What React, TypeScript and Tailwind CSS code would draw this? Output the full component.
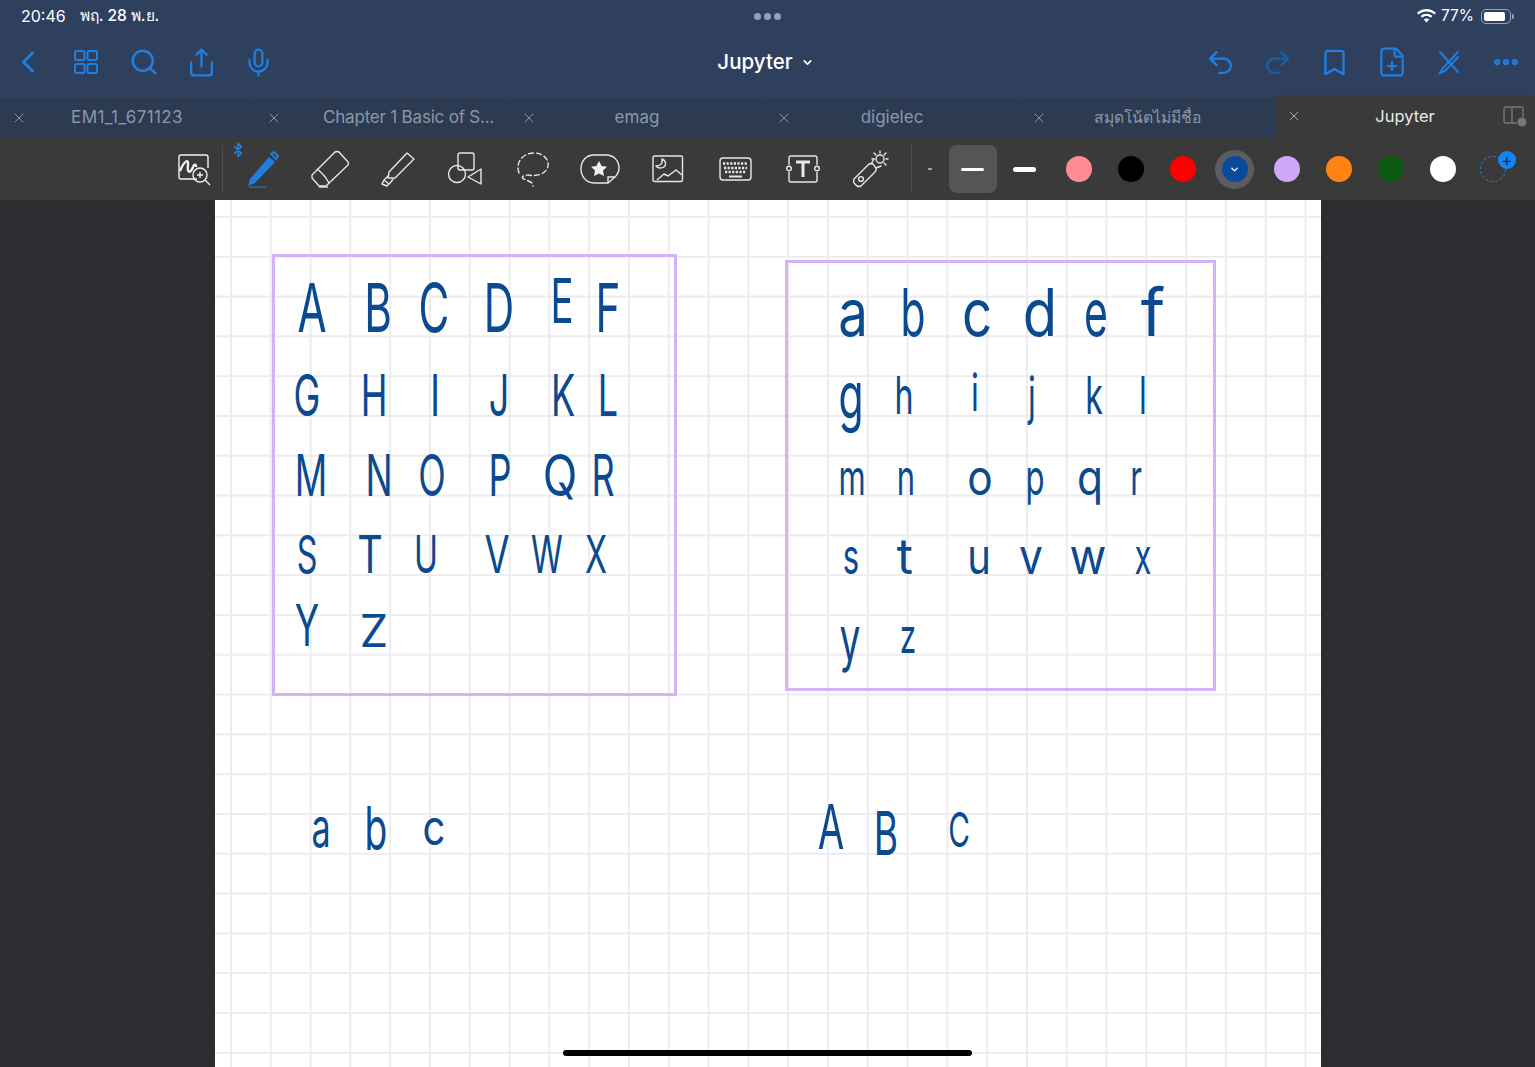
import { Bluetooth, Bookmark, ChevronDown, ChevronLeft, FilePlus, Mic, MoreHorizontal, Redo2, Search, Share, Undo2, X } from "lucide-react";

const sans = "font-['Inter','Noto_Sans','Liberation_Sans',sans-serif]";

const tabs = [
  { label: "EM1_1_671123", cls: "justify-center tracking-[0.4px]" },
  { label: "Chapter 1 Basic of S...", cls: "pl-[68px] tracking-[-0.2px]" },
  { label: "emag", cls: "justify-center" },
  { label: "digielec", cls: "justify-center" },
  { label: "สมุดโน้ตไม่มีชื่อ", cls: "justify-center text-[15.7px]!" },
];

const colors = ["bg-[#ff8c90]", "bg-black", "bg-[#ff0000]", "", "bg-[#cfa8f7]", "bg-[#ff8214]", "bg-[#0f5a12]", "bg-white"];

const ink = [
  // capitals, left box
  ["A", "left-[97px] top-[73px] text-[68px]"],
  ["B", "left-[163px] top-[73px] text-[68px]"],
  ["C", "left-[219px] top-[73px] text-[68px]"],
  ["D", "left-[284px] top-[73px] text-[68px]"],
  ["E", "left-[347px] top-[70px] text-[62px]"],
  ["F", "left-[393px] top-[73px] text-[68px]"],
  ["G", "left-[92px] top-[166px] text-[58px]"],
  ["H", "left-[159px] top-[166px] text-[58px]"],
  ["I", "left-[220px] top-[166px] text-[58px]"],
  ["J", "left-[284px] top-[166px] text-[58px]"],
  ["K", "left-[348px] top-[166px] text-[58px]"],
  ["L", "left-[393px] top-[166px] text-[58px]"],
  ["M", "left-[96px] top-[246px] text-[58px]"],
  ["N", "left-[164px] top-[246px] text-[58px]"],
  ["O", "left-[217px] top-[246px] text-[58px]"],
  ["P", "left-[285px] top-[246px] text-[58px]"],
  ["Q", "left-[345px] top-[246px] text-[58px] scale-x-[0.78]!"],
  ["R", "left-[388px] top-[246px] text-[58px]"],
  ["S", "left-[92px] top-[329px] text-[52px]"],
  ["T", "left-[155px] top-[329px] text-[52px] scale-x-[0.76]!"],
  ["U", "left-[211px] top-[329px] text-[52px]"],
  ["V", "left-[282px] top-[329px] text-[52px] scale-x-[0.7]!"],
  ["W", "left-[332px] top-[329px] text-[52px]"],
  ["X", "left-[381px] top-[329px] text-[52px]"],
  ["Y", "left-[92px] top-[396px] text-[58px]"],
  ["Z", "left-[159px] top-[408px] text-[45px] scale-x-100!"],
  // small letters, right box
  ["a", "left-[638px] top-[79px] text-[66px] scale-x-[0.8]!"],
  ["b", "left-[698px] top-[79px] text-[66px]"],
  ["c", "left-[762px] top-[79px] text-[66px] scale-x-[0.8]!"],
  ["d", "left-[825px] top-[79px] text-[66px] scale-x-[0.85]!"],
  ["e", "left-[881px] top-[79px] text-[66px]"],
  ["f", "left-[938px] top-[79px] text-[66px] scale-x-100!"],
  ["g", "left-[636px] top-[162px] text-[66px]"],
  ["h", "left-[689px] top-[170px] text-[52px]"],
  ["i", "left-[760px] top-[167px] text-[52px]"],
  ["j", "left-[817px] top-[170px] text-[52px]"],
  ["k", "left-[879px] top-[170px] text-[52px]"],
  ["l", "left-[928px] top-[170px] text-[52px]"],
  ["m", "left-[637px] top-[252px] text-[50px]"],
  ["n", "left-[691px] top-[252px] text-[50px]"],
  ["o", "left-[765px] top-[252px] text-[50px] scale-x-[0.85]!"],
  ["p", "left-[820px] top-[252px] text-[50px]"],
  ["q", "left-[875px] top-[252px] text-[50px] scale-x-[0.85]!"],
  ["r", "left-[921px] top-[252px] text-[50px]"],
  ["s", "left-[636px] top-[331px] text-[50px]"],
  ["t", "left-[690px] top-[331px] text-[50px] scale-x-100!"],
  ["u", "left-[764px] top-[331px] text-[50px] scale-x-[0.8]!"],
  ["v", "left-[816px] top-[331px] text-[50px] scale-x-[0.85]!"],
  ["w", "left-[873px] top-[331px] text-[50px] scale-x-[0.9]!"],
  ["x", "left-[928px] top-[331px] text-[50px]"],
  ["y", "left-[635px] top-[408px] text-[60px]"],
  ["z", "left-[693px] top-[412px] text-[48px]"],
  // bottom row
  ["a", "left-[106px] top-[600px] text-[55px]"],
  ["b", "left-[161px] top-[598px] text-[60px]"],
  ["c", "left-[219px] top-[602px] text-[50px] scale-x-[0.8]!"],
  ["A", "left-[616px] top-[596px] text-[62px]"],
  ["B", "left-[671px] top-[603px] text-[60px]"],
  ["C", "left-[744px] top-[606px] text-[48px]"],
];

function GridIcon() {
  return (
    <svg width="26" height="26" viewBox="0 0 26 26" fill="none" stroke="currentColor" strokeWidth="2">
      <rect x="2" y="2" width="9.5" height="9" rx="1.5" />
      <rect x="14.5" y="2" width="9.5" height="9" rx="1.5" />
      <rect x="2" y="15" width="9.5" height="9" rx="1.5" />
      <rect x="14.5" y="15" width="9.5" height="9" rx="1.5" />
    </svg>
  );
}

function PenCross() {
  return (
    <svg width="24" height="26" viewBox="0 0 24 26" fill="none" stroke="currentColor" strokeWidth="2" strokeLinecap="round">
      <path d="M3 3 L21 23" />
      <path d="M19 5 L6 19 L3 24 L8 22 L21 8" />
      <path d="M20 4 L21 3" />
    </svg>
  );
}

function ZoomWrite() {
  return (
    <svg width="36" height="34" viewBox="0 0 36 34" fill="none" stroke="#f2f2f2" strokeWidth="1.4">
      <path d="M20 27 H4 a2 2 0 0 1 -2 -2 V5 a2 2 0 0 1 2 -2 H29 a2 2 0 0 1 2 2 V16" />
      <path d="M3 19 C7 9 12 6 11 13 C10 20 13 23 16 15 C17 12 19 12 19 15" strokeWidth="2.4" />
      <circle cx="23" cy="23" r="7" />
      <path d="M28 28 L33 33 M23 20 V26 M20 23 H26" />
    </svg>
  );
}

function BluePen() {
  return (
    <svg width="36" height="38" viewBox="0 0 36 38" fill="none">
      <path d="M6 29 L25 7 L31 12 L11 33 L4 36 Z" fill="#1f7ee0" />
      <path d="M27 4 L30 2 L34 6 L32 9 Z" fill="none" stroke="#1f7ee0" strokeWidth="2" />
      <path d="M5 37 H22" stroke="#1f7ee0" strokeWidth="1" />
    </svg>
  );
}

function Eraser() {
  return (
    <svg width="40" height="38" viewBox="0 0 40 38" fill="none" stroke="#e8e8e8" strokeWidth="1.4" strokeLinejoin="round">
      <path d="M2 25 L25 2 Q27 1 29 2 L38 12 Q39 14 38 15 L16 36 H9 L2 28 Z" />
      <path d="M7 19 Q14 24 19 33" />
      <path d="M9 37 H18" />
    </svg>
  );
}

function Highlighter() {
  return (
    <svg width="36" height="36" viewBox="0 0 36 36" fill="none" stroke="#e8e8e8" strokeWidth="1.4" strokeLinejoin="round">
      <path d="M10 21 L28 2 L35 8 L16 27 L9 27 Z" />
      <path d="M10 24 L5 29 L3 33 L8 35 L12 31 L14 28" />
      <path d="M5 29 L10 33" />
    </svg>
  );
}

function Shapes() {
  return (
    <svg width="36" height="34" viewBox="0 0 36 34" fill="none" stroke="#e8e8e8" strokeWidth="1.4" strokeLinejoin="round">
      <rect x="11" y="1" width="16" height="17" rx="2" />
      <circle cx="10" cy="22" r="8.5" />
      <path d="M34 17 V32 L21 25 Z" />
    </svg>
  );
}

function Lasso() {
  return (
    <svg width="34" height="36" viewBox="0 0 34 36" fill="none" stroke="#e8e8e8" strokeWidth="1.4" strokeDasharray="5 3" strokeLinecap="round">
      <path d="M3 22 C-1 10 8 2 18 2 C28 2 33 9 32 15 C31 22 22 26 12 24 C8 24 4 26 8 28 C14 31 17 31 17 35" />
    </svg>
  );
}

function Sticker() {
  return (
    <svg width="40" height="32" viewBox="0 0 40 32" fill="#f2f2f2" stroke="none">
      <path d="M14 2 H26 C34 2 39 8 39 15 C39 19 37 22 35 24 L28 30 H14 C6 30 1 23 1 16 C1 8 6 2 14 2 Z M35 24 H28 V30" fill="none" stroke="#e8e8e8" strokeWidth="1.4" />
      <path d="M19 8 L21.6 13 L27 13.8 L23 17.6 L24 23 L19 20.4 L14 23 L15 17.6 L11 13.8 L16.4 13 Z" />
    </svg>
  );
}

function Picture() {
  return (
    <svg width="32" height="28" viewBox="0 0 32 28" fill="none" stroke="#e8e8e8" strokeWidth="1.4" strokeLinejoin="round">
      <rect x="1" y="1" width="29.5" height="25.5" rx="1.5" />
      <path d="M10 4 C15 6 15 13 8 13 C5 13 5 12 4 11 C8 11 11 9 10 4 Z" />
      <path d="M5 25 L12 19 L16 21 L24 15 L30 20" />
    </svg>
  );
}

function Keyboard() {
  return (
    <svg width="33" height="24" viewBox="0 0 33 24" fill="none">
      <rect x="1" y="1" width="31" height="22" rx="3" stroke="#e8e8e8" strokeWidth="1.4" />
      <path d="M4 6.5 H29 M5 11 H28 M6 15 H27" stroke="#e8e8e8" strokeWidth="2.4" strokeDasharray="2.2 1.4" />
      <path d="M10 19.5 H23" stroke="#e8e8e8" strokeWidth="2" />
    </svg>
  );
}

function TextBox() {
  return (
    <svg width="34" height="28" viewBox="0 0 34 28" fill="none" stroke="#e8e8e8" strokeWidth="1.4">
      <path d="M3 10 V3 a2 2 0 0 1 2 -2 H29 a2 2 0 0 1 2 2 V10 M3 17 V25 a2 2 0 0 0 2 2 H29 a2 2 0 0 0 2 -2 V17" />
      <circle cx="3" cy="13.5" r="2.3" />
      <circle cx="31" cy="13.5" r="2.3" />
      <path d="M10 7 H24 M17 7 V22" strokeWidth="3" />
    </svg>
  );
}

function Laser() {
  return (
    <svg width="38" height="38" viewBox="0 0 38 38" fill="none" stroke="#e8e8e8" strokeWidth="1.4" strokeLinecap="round">
      <path d="M2 29 L17 14 Q19 13 21 14 L24 18 Q25 20 23 22 L9 36 Q7 37 5 36 L2 33 Q1 31 2 29 Z" />
      <circle cx="9" cy="29" r="2.4" />
      <path d="M19 14 L22 9 M24 18 L29 16" />
      <circle cx="28" cy="9" r="4" />
      <path d="M28 1 V3 M36 9 H34 M22 3 L24 5 M34 3 L32 5 M34 15 L32 13 M20 9 H22" />
    </svg>
  );
}

const tools = [<BluePen key="pen" />, <Eraser key="eraser" />, <Highlighter key="marker" />, <Shapes key="shapes" />, <Lasso key="lasso" />, <Sticker key="sticker" />, <Picture key="picture" />, <Keyboard key="keys" />, <TextBox key="text" />, <Laser key="laser" />];

function Canvas() {
  return (
    <div className="relative flex-1 bg-white bg-[linear-gradient(to_right,#ececef_2px,transparent_2px),linear-gradient(to_bottom,#ececef_2px,transparent_2px)] bg-[size:39.8px_39.8px] bg-[position:15px_16px]">
      <div className="absolute left-[57px] top-[54px] h-[442px] w-[405px] border-[3px] border-[#d3b3f5]" />
      <div className="absolute left-[570px] top-[60px] h-[431px] w-[431px] border-[3px] border-[#d3b3f5]" />
      {ink.map(([c, cls], i) => (
        <span key={i} className={`absolute -translate-x-1/2 scale-x-[0.62] font-['Inter'] font-normal leading-none text-[#0b4a8f] ${cls}`}>
          {c}
        </span>
      ))}
      <div className="absolute bottom-[11px] left-[348px] h-[6px] w-[409px] rounded-full bg-black" />
    </div>
  );
}

export default function App() {
  return (
    <div className={`flex h-screen w-full flex-col overflow-hidden bg-[#2c2d30] ${sans}`}>
      <header className="bg-[#2f405f] pb-[2px]">
        <div className="grid h-8 grid-cols-3 items-center px-[21px] text-white">
          <div className="flex items-center gap-[14px] text-[16px]">
            <span>20:46</span>
            <span className="text-[15.5px] font-medium">พฤ. 28 พ.ย.</span>
          </div>
          <div className="flex justify-center gap-[3px]">
            <span className="h-[7px] w-[7px] rounded-full bg-[#8ea0c4]" />
            <span className="h-[7px] w-[7px] rounded-full bg-[#8ea0c4]" />
            <span className="h-[7px] w-[7px] rounded-full bg-[#8ea0c4]" />
          </div>
          <div className="flex items-center justify-end gap-[5px] text-[15.5px]">
            <svg width="19" height="14" viewBox="0 0 19 14" fill="white">
              <path d="M9.5 0 C13 0 16.4 1.4 19 3.8 L17.4 5.5 C15.2 3.5 12.4 2.4 9.5 2.4 C6.6 2.4 3.8 3.5 1.6 5.5 L0 3.8 C2.6 1.4 6 0 9.5 0 Z" />
              <path d="M9.5 4.8 C11.7 4.8 13.8 5.6 15.4 7.1 L13.8 8.8 C12.6 7.7 11.1 7.1 9.5 7.1 C7.9 7.1 6.4 7.7 5.2 8.8 L3.6 7.1 C5.2 5.6 7.3 4.8 9.5 4.8 Z" />
              <path d="M9.5 9.4 C10.6 9.4 11.5 9.8 12.2 10.5 L9.5 13.6 L6.8 10.5 C7.5 9.8 8.4 9.4 9.5 9.4 Z" />
            </svg>
            <span>77%</span>
            <div className="ml-[2px] flex items-center">
              <div className="h-[15px] w-[30px] rounded-[5px] border border-[#9aa5b8] p-[2px]">
                <div className="h-full w-[21px] rounded-[2px] bg-white" />
              </div>
              <div className="ml-px h-[5px] w-[2px] rounded-r-full bg-[#9aa5b8]" />
            </div>
          </div>
        </div>
        <div className="grid h-[60px] grid-cols-3 items-center text-[#1f7ee0]">
          <div className="flex items-center">
            <div className="flex w-[57.5px] justify-center"><ChevronLeft size={36} strokeWidth={2} className="-translate-x-px" /></div>
            <div className="flex w-[57.5px] justify-center"><GridIcon /></div>
            <div className="flex w-[57.5px] justify-center"><Search size={30} strokeWidth={2} /></div>
            <div className="flex w-[57.5px] justify-center"><Share size={31} strokeWidth={1.8} /></div>
            <div className="flex w-[57.5px] justify-center"><Mic size={31} strokeWidth={1.8} /></div>
          </div>
          <div className="flex items-center justify-center gap-[8px] pr-[4px] text-[20.5px] font-medium text-white">
            <span>Jupyter</span>
            <ChevronDown size={13} strokeWidth={3} />
          </div>
          <div className="flex items-center justify-end">
            <div className="flex w-[57.2px] justify-center"><Undo2 size={31} strokeWidth={1.8} /></div>
            <div className="flex w-[57.2px] justify-center text-[#1c5fa8]"><Redo2 size={31} strokeWidth={1.8} /></div>
            <div className="flex w-[57.2px] justify-center"><Bookmark size={31} strokeWidth={1.8} /></div>
            <div className="flex w-[57.2px] justify-center"><FilePlus size={32} strokeWidth={1.6} /></div>
            <div className="flex w-[57.2px] justify-center"><PenCross /></div>
            <div className="flex w-[57.2px] justify-center"><MoreHorizontal size={30} strokeWidth={3} /></div>
          </div>
        </div>
        <div className="h-[4px]" />
      </header>

      <div className="flex h-10 items-end bg-[#2c3a52]">
        {tabs.map((t) => (
          <div key={t.label} className={`relative flex h-10 w-[255px] items-center border-r border-[#2f3e58] text-[17px] text-[#8e97a6] ${t.cls}`}>
            <X size={16} strokeWidth={1.5} className="absolute left-[11px] top-[12px]" />
            <span className="whitespace-nowrap">{t.label}</span>
          </div>
        ))}
        <div className="relative flex h-[43px] flex-1 items-center justify-center rounded-t-lg bg-[#3a3a3a] text-[16.5px] text-[#e8e8e8]">
          <X size={16} strokeWidth={1.5} className="absolute left-[11px] top-[13px] text-[#a8a8a8]" />
          <span>Jupyter</span>
          <svg className="absolute right-[8px] top-[11px]" width="24" height="22" viewBox="0 0 24 22" fill="none" stroke="#77777a" strokeWidth="1.4">
            <path d="M14 17 H3 a2 2 0 0 1 -2 -2 V3 a2 2 0 0 1 2 -2 H18 a2 2 0 0 1 2 2 V11 M9 1 V17" />
            <circle cx="19" cy="16" r="4.5" fill="#77777a" stroke="none" />
          </svg>
        </div>
      </div>

      <div className="flex h-[62px] items-center bg-[#3a3a3a] pl-[173px]">
        <div className="flex w-[44px] justify-center"><ZoomWrite /></div>
        <div className="ml-[5px] h-[48px] w-px bg-[#4c4c4c]" />
        <div className="relative ml-[5px] flex">
          <Bluetooth size={16} strokeWidth={2.5} className="absolute left-[2px] top-[-3px] text-[#1f7ee0]" />
          {tools.map((tool) => (
            <div key={tool.key} className="flex h-[48px] w-[67.7px] items-center justify-center">{tool}</div>
          ))}
        </div>
        <div className="ml-[6px] h-[48px] w-px bg-[#4c4c4c]" />
        <div className="flex w-[37px] justify-center"><div className="h-[1.5px] w-[4px] bg-[#a0a0a0]" /></div>
        <div className="flex h-[48px] w-[48px] items-center justify-center rounded-lg bg-[#555558]">
          <div className="h-[3px] w-[23px] rounded-full bg-white" />
        </div>
        <div className="flex w-[56px] justify-center"><div className="h-[5px] w-[23px] rounded-full bg-white" /></div>
        {colors.map((c, i) =>
          c ? (
            <div key={i} className="flex w-[52px] justify-center"><div className={`h-[26px] w-[26px] rounded-full ${c}`} /></div>
          ) : (
            <div key={i} className="flex w-[52px] justify-center">
              <div className="flex h-[39px] w-[39px] items-center justify-center rounded-full bg-[#5c5c60]">
                <div className="flex h-[26px] w-[26px] items-center justify-center rounded-full bg-[#0a4a9b]">
                  <ChevronDown size={11} strokeWidth={3} className="text-white" />
                </div>
              </div>
            </div>
          ),
        )}
        <div className="relative flex w-[52px] justify-center">
          <div className="-ml-[4px] h-[26px] w-[26px] rounded-full border-[1.5px] border-dashed border-[#1f7ee0]" />
          <div className="absolute left-[29px] top-[-5px] flex h-[18px] w-[18px] items-center justify-center rounded-full bg-[#1683f0] text-[17px] leading-none text-[#12304f]">+</div>
        </div>
      </div>

      <main className="flex min-h-0 flex-1">
        <div className="w-[215px] bg-[#2c2d30]" />
        <Canvas />
        <div className="w-[214px] bg-[#2c2d30]" />
      </main>
    </div>
  );
}
